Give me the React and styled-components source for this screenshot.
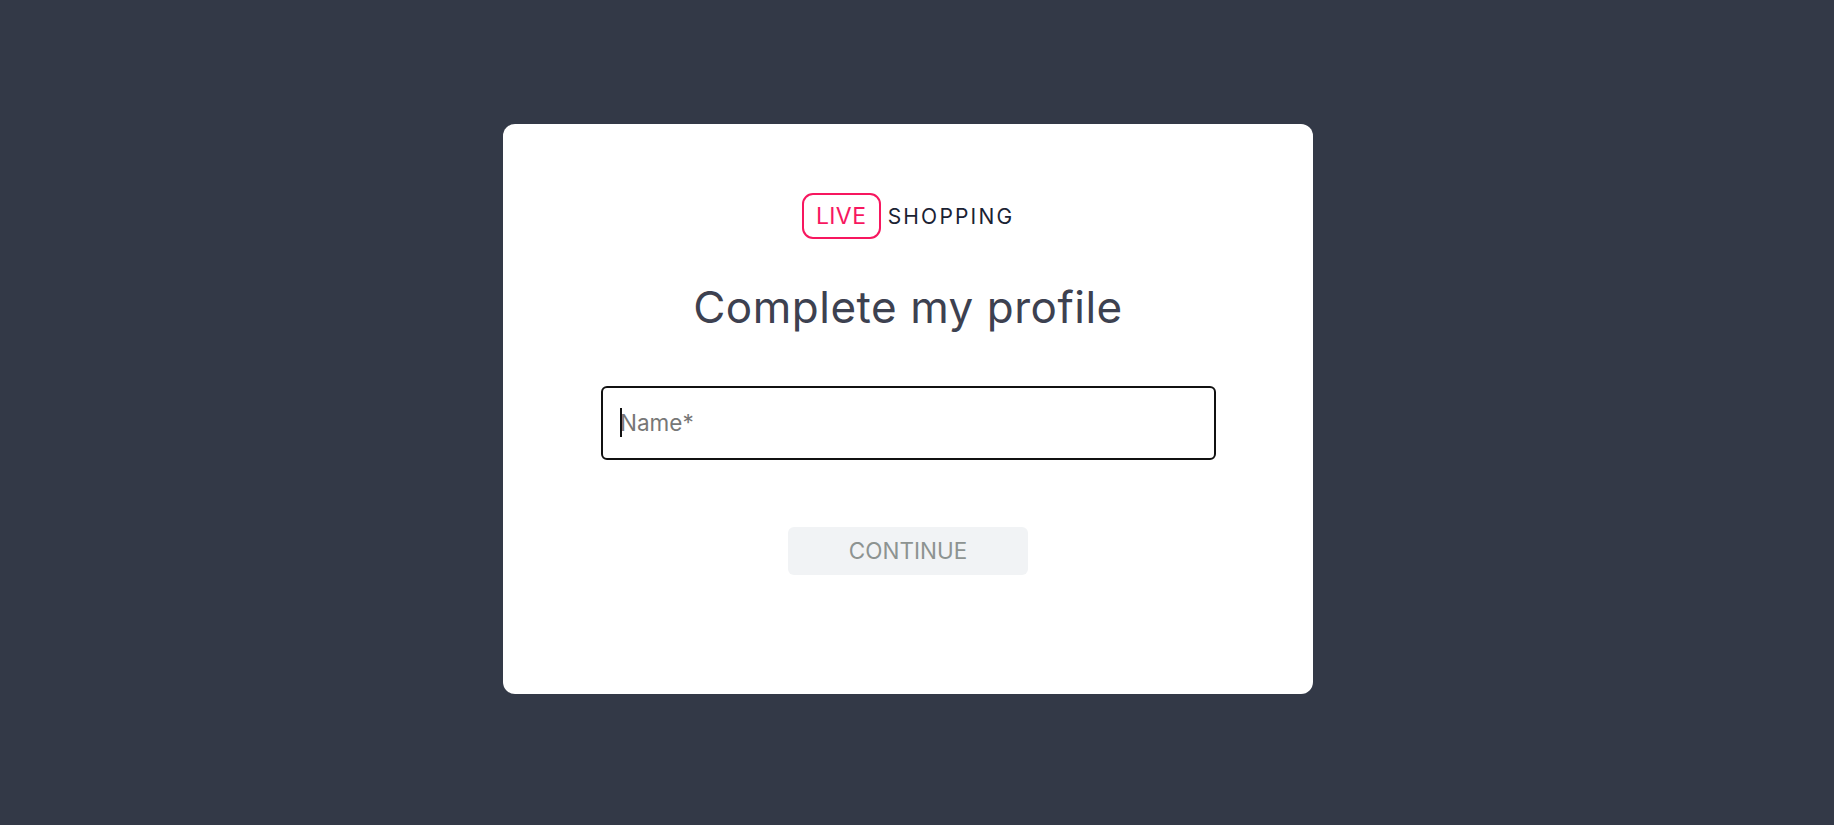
import React from "react";
import styled, { createGlobalStyle } from "styled-components";

const GlobalStyle = createGlobalStyle`
  html, body {
    margin: 0;
    height: 100%;
    overflow: hidden;
    background: #333947;
  }
`;

const Page = styled.div`
  height: 825px;
  box-sizing: border-box;
  padding: 0 18px 7px 0;
  display: flex;
  align-items: center;
  justify-content: center;
  font-family: Inter, "Liberation Sans", sans-serif;
`;

const Card = styled.div`
  width: 810px;
  height: 570px;
  box-sizing: border-box;
  padding: 69px 98px 0;
  background: #fff;
  border-radius: 12px;
  display: flex;
  flex-direction: column;
  align-items: center;
`;

const Logo = styled.div`
  display: flex;
  align-items: center;
  gap: 7px;
`;

const LiveBadge = styled.div`
  width: 79px;
  height: 46px;
  box-sizing: border-box;
  border: 2px solid #f7175f;
  border-radius: 11px;
  color: #f7175f;
  font-size: 23px;
  letter-spacing: 0.4px;
  display: flex;
  align-items: center;
  justify-content: center;
`;

const Brand = styled.div`
  color: #1a2233;
  font-size: 21px;
  letter-spacing: 2.2px;
`;

const Title = styled.h1`
  margin: 42px 0 0;
  color: #3d4150;
  font-size: 44px;
  line-height: 52px;
  font-weight: 400;
  letter-spacing: 0.52px;
`;

const Field = styled.div`
  position: relative;
  align-self: flex-start;
  width: 615px;
  margin-top: 53px;
`;

const Input = styled.input`
  display: block;
  width: 100%;
  height: 74px;
  box-sizing: border-box;
  padding: 0 17px 2px;
  border: 2px solid #111;
  border-radius: 6px;
  outline: none;
  background: #fff;
  font-family: inherit;
  font-size: 22.5px;

  &::placeholder {
    color: #777;
    opacity: 1;
  }
`;

const Caret = styled.span`
  position: absolute;
  left: 19px;
  top: 22px;
  width: 2px;
  height: 29px;
  background: #111;
`;

const ContinueButton = styled.button`
  width: 240px;
  height: 48px;
  margin-top: 67px;
  padding: 0 0 2px;
  border: none;
  border-radius: 6px;
  background: #f1f3f5;
  color: #8d9391;
  font-family: inherit;
  font-size: 22.5px;
`;

const App = () => {
  return (
    <Page>
      <GlobalStyle />
      <Card>
        <Logo>
          <LiveBadge>LIVE</LiveBadge>
          <Brand>SHOPPING</Brand>
        </Logo>
        <Title>Complete my profile</Title>
        <Field>
          <Input placeholder="Name*" />
          <Caret />
        </Field>
        <ContinueButton disabled>CONTINUE</ContinueButton>
      </Card>
    </Page>
  );
};

export default App;
